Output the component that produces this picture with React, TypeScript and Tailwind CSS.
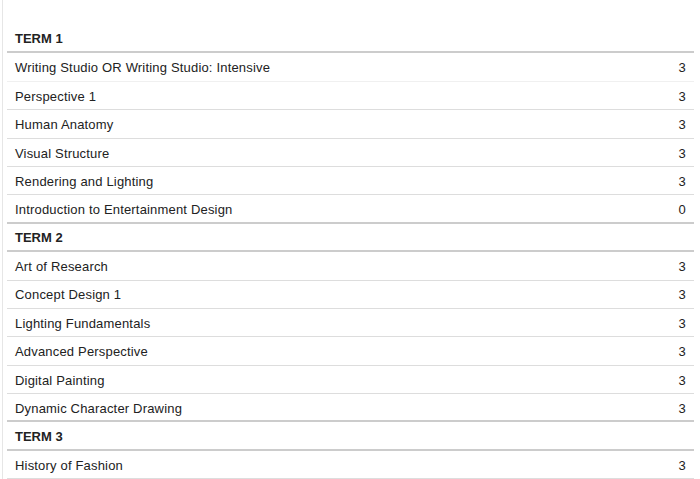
import React from "react";

type Row = { name: string; credits: string };
const terms: { title: string; rows: Row[] }[] = [
  {
    title: "TERM 1",
    rows: [
      { name: "Writing Studio OR Writing Studio: Intensive", credits: "3" },
      { name: "Perspective 1", credits: "3" },
      { name: "Human Anatomy", credits: "3" },
      { name: "Visual Structure", credits: "3" },
      { name: "Rendering and Lighting", credits: "3" },
      { name: "Introduction to Entertainment Design", credits: "0" },
    ],
  },
  {
    title: "TERM 2",
    rows: [
      { name: "Art of Research", credits: "3" },
      { name: "Concept Design 1", credits: "3" },
      { name: "Lighting Fundamentals", credits: "3" },
      { name: "Advanced Perspective", credits: "3" },
      { name: "Digital Painting", credits: "3" },
      { name: "Dynamic Character Drawing", credits: "3" },
    ],
  },
  {
    title: "TERM 3",
    rows: [{ name: "History of Fashion", credits: "3" }],
  },
];

export default function App() {
  return (
    <div
      className="w-[700px] h-[479px] overflow-hidden bg-white text-[13px] text-[#222] tracking-[0.18px]"
      style={{ fontFamily: '"Liberation Sans", Arial, sans-serif' }}
    >
      <div className="ml-[2px] h-full border-l border-[#e6e6e6] pl-[4px] pr-[6px] pt-[25px]">
        {terms.map((t, ti) => (
          <div key={t.title}>
            <div className="flex h-[28.4px] items-center border-b-2 border-[#cccccc] px-[8px] pt-[2px] font-bold tracking-normal">
              {t.title}
            </div>
            {t.rows.map((r, ri) => {
              const last = ri === t.rows.length - 1 && ti < terms.length - 1;
              const first = ti === 0 && ri === 0;
              const border = last
                ? "border-b-2 border-[#cccccc]"
                : first
                ? "border-b border-[#f0f0f0]"
                : "border-b border-[#dddddd]";
              return (
                <div
                  key={r.name}
                  className={`flex h-[28.4px] items-center justify-between px-[8px] pt-[2px] ${border}`}
                >
                  <span>{r.name}</span>
                  <span>{r.credits}</span>
                </div>
              );
            })}
          </div>
        ))}
      </div>
    </div>
  );
}
